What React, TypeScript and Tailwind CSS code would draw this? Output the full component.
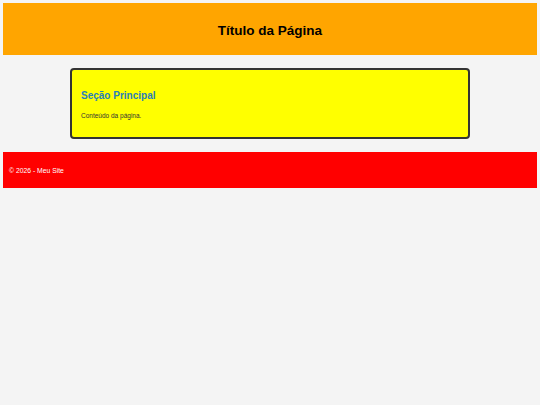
export default function App() {
  return (
    <div className="min-h-[405px] bg-[#f4f4f4] p-[3px] font-['Liberation_Sans',Arial,sans-serif]">
      {/* Header */}
      <header className="flex h-[52px] items-center justify-center bg-[#ffa500] pt-[4px]">
        <h1 className="text-[13.5px] font-bold text-black">Título da Página</h1>
      </header>

      {/* Main */}
      <main className="px-[67px] pt-[13px] pb-[13px]">
        <section className="h-[71px] rounded-[4px] border-2 border-[#333] bg-[#ffff00] px-[9px] pt-[19px]">
          <h2 className="text-[10px] font-bold leading-[14px] text-[#2980b9]">Seção Principal</h2>
          <p className="mt-[8px] text-[6.5px] leading-[9px] text-[#333]">Conteúdo da página.</p>
        </section>
      </main>

      {/* Footer */}
      <footer className="flex h-[36px] items-center bg-[#ff0000] px-[6px] pt-[2px]">
        <p className="text-[6.8px] text-white">© 2026 - Meu Site</p>
      </footer>
    </div>
  );
}
